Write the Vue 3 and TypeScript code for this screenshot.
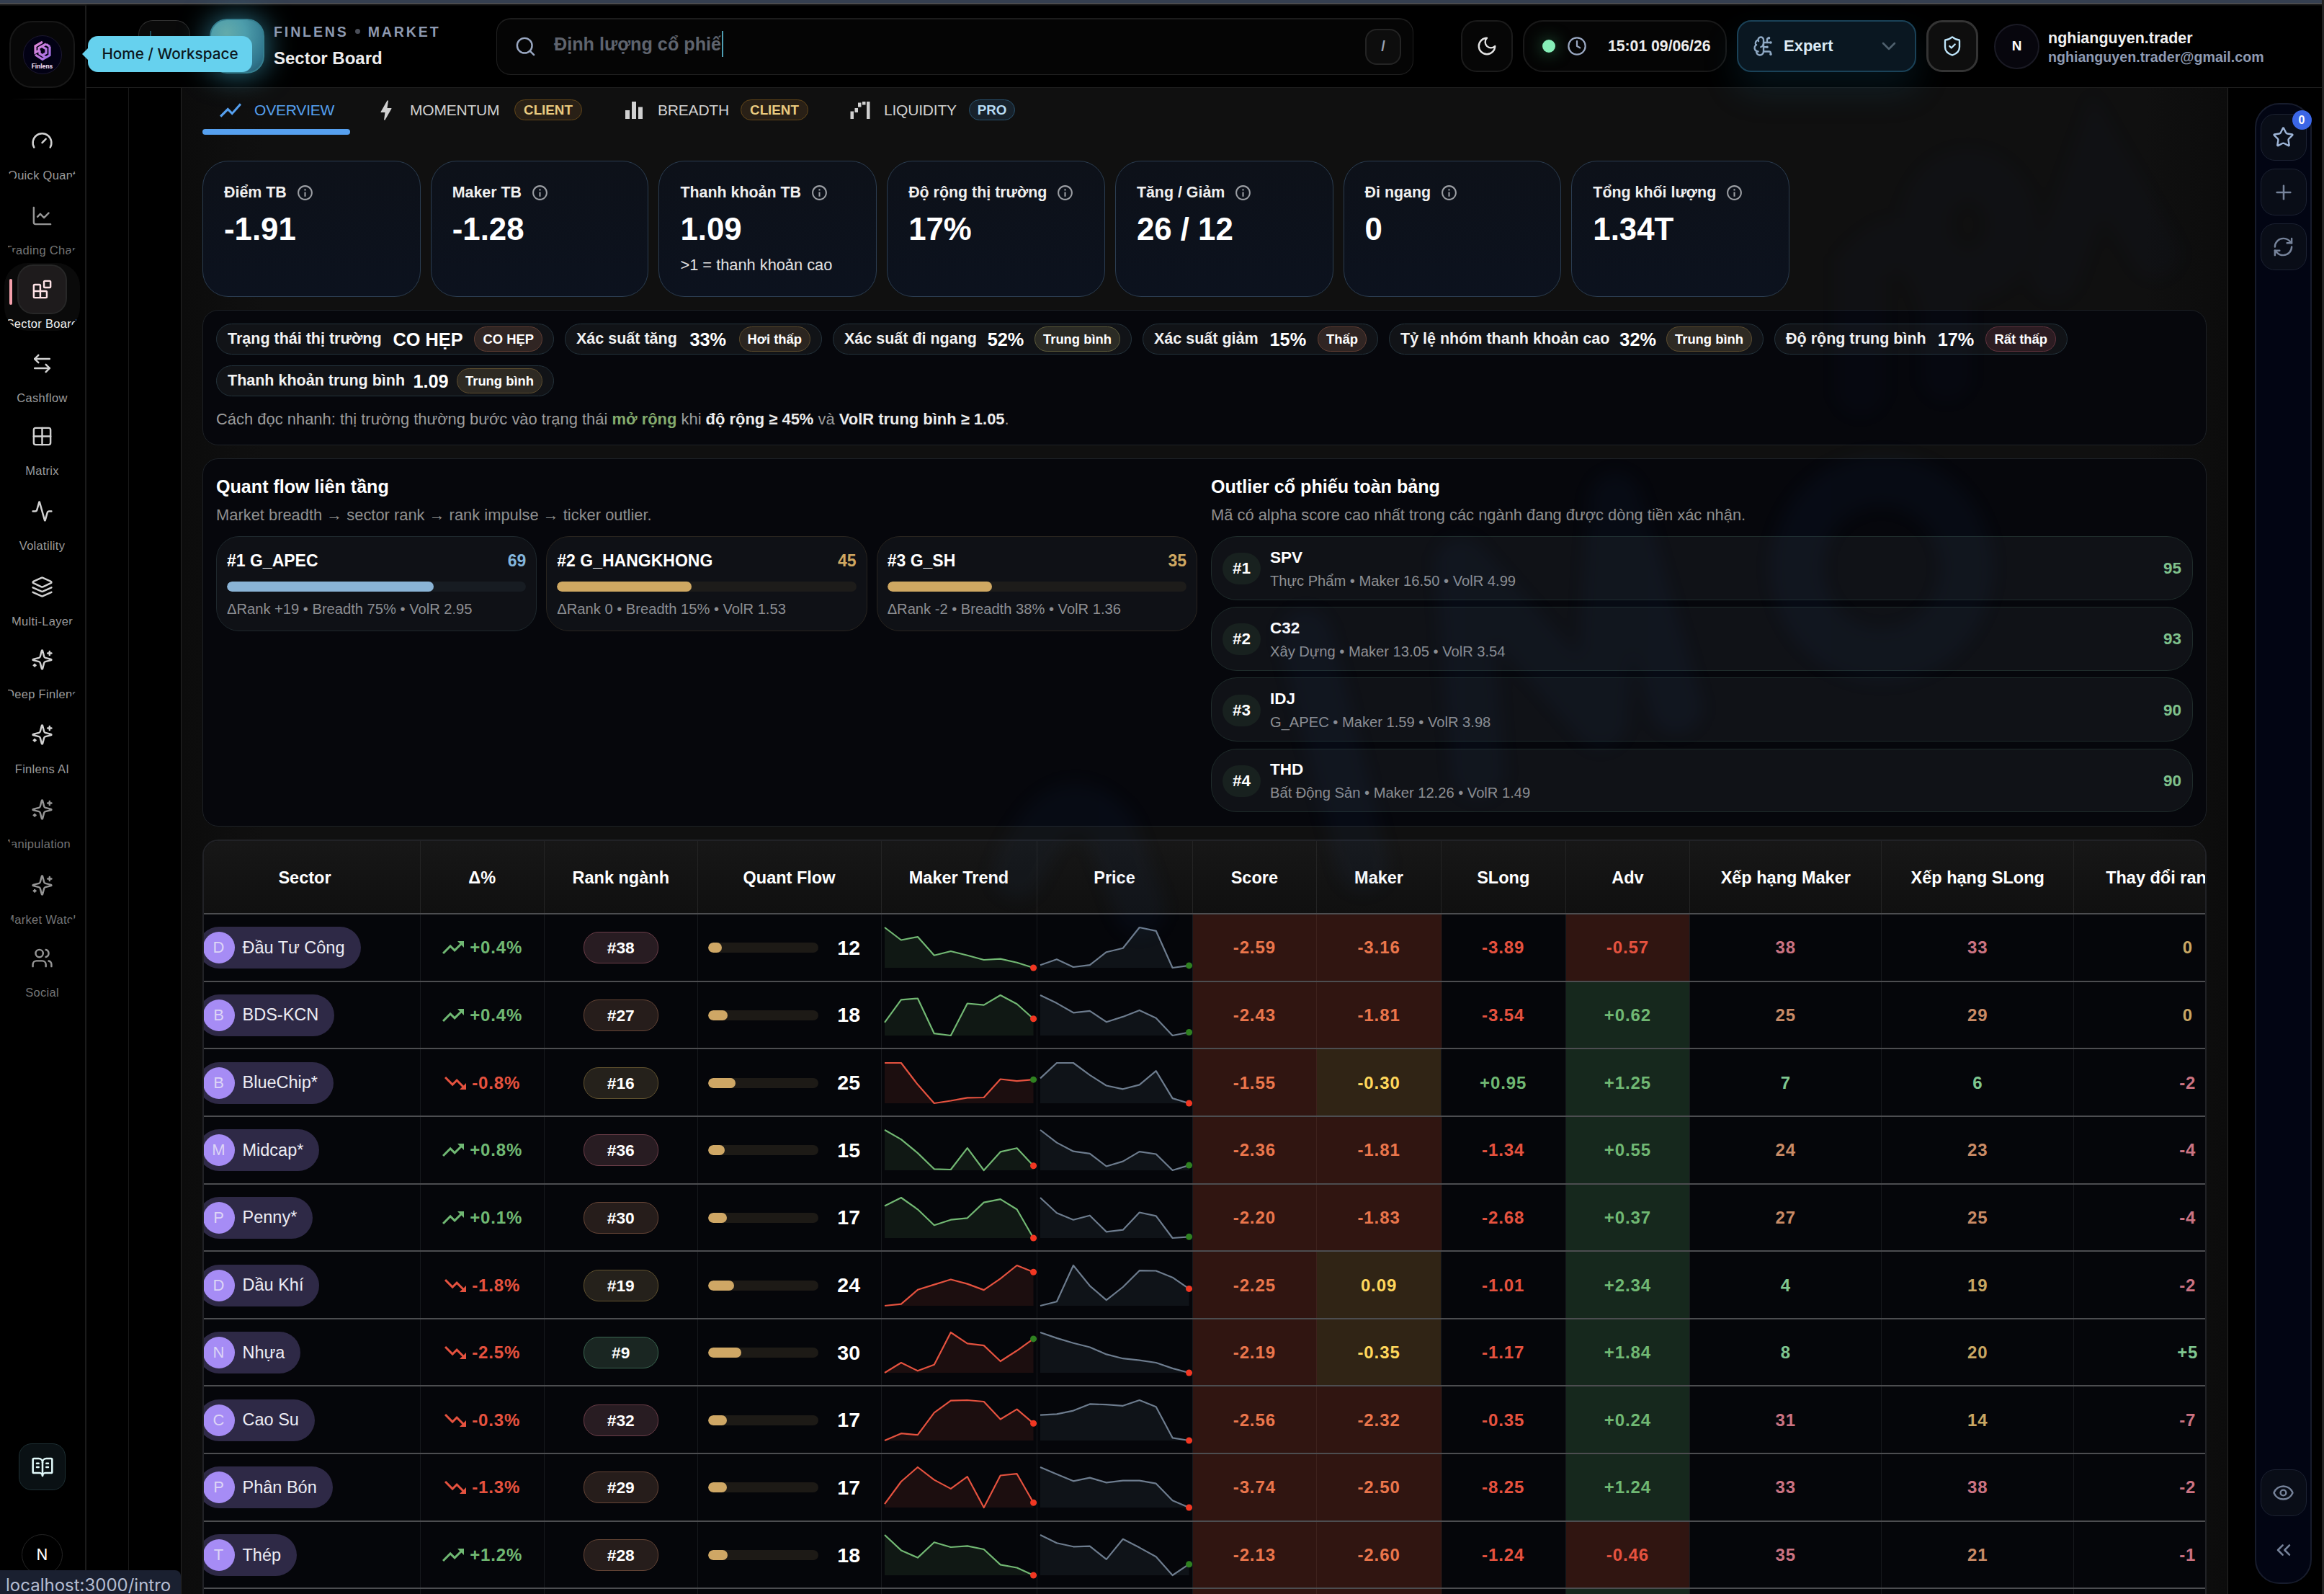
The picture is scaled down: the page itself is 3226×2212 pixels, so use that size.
<script setup lang="ts">
interface NavItem { label: string; icon: string[]; top: number; dim?: boolean; active?: boolean; shift?: number }
interface Row {
  name: string; delta: string; rank: number; flow: number
  maker: number[]; makerUp: boolean; price: number[]; priceUp: boolean
  score: string; mk: string; slong: string; adv: string; rm: number; rs: number; chg: string
}

const ICON: Record<string, string[]> = {
  gauge: ['m12 14 4-4', 'M3.34 19a10 10 0 1 1 17.32 0'],
  chart: ['M3 3v16a2 2 0 0 0 2 2h16', 'm19 9-5 5-4-4-3 3'],
  blocks: ['M15 3h5a1 1 0 0 1 1 1v5a1 1 0 0 1-1 1h-5a1 1 0 0 1-1-1V4a1 1 0 0 1 1-1z', 'M10 21V8a1 1 0 0 0-1-1H4a1 1 0 0 0-1 1v12a1 1 0 0 0 1 1h12a1 1 0 0 0 1-1v-5a1 1 0 0 0-1-1H3'],
  swap: ['M8 3 4 7l4 4', 'M4 7h16', 'm16 21 4-4-4-4', 'M20 17H4'],
  grid: ['M5 3h14a2 2 0 0 1 2 2v14a2 2 0 0 1-2 2H5a2 2 0 0 1-2-2V5a2 2 0 0 1 2-2z', 'M3 12h18', 'M12 3v18'],
  activity: ['M22 12h-2.48a2 2 0 0 0-1.93 1.46l-2.35 8.36a.25.25 0 0 1-.48 0L9.24 2.18a.25.25 0 0 0-.48 0l-2.35 8.36A2 2 0 0 1 4.49 12H2'],
  layers: ['m12.83 2.18a2 2 0 0 0-1.66 0L2.6 6.08a1 1 0 0 0 0 1.83l8.58 3.91a2 2 0 0 0 1.66 0l8.58-3.9a1 1 0 0 0 0-1.83Z', 'm22 17.65-9.17 4.16a2 2 0 0 1-1.66 0L2 17.65', 'm22 12.65-9.17 4.16a2 2 0 0 1-1.66 0L2 12.65'],
  sparkles: ['M9.937 15.5A2 2 0 0 0 8.5 14.063l-6.135-1.582a.5.5 0 0 1 0-.962L8.5 9.936A2 2 0 0 0 9.937 8.5l1.582-6.135a.5.5 0 0 1 .963 0L14.063 8.5A2 2 0 0 0 15.5 9.937l6.135 1.581a.5.5 0 0 1 0 .964L15.5 14.063a2 2 0 0 0-1.437 1.437l-1.582 6.135a.5.5 0 0 1-.963 0z', 'M20 3v4', 'M22 5h-4', 'M4 17v2', 'M5 18H3'],
  users: ['M16 21v-2a4 4 0 0 0-4-4H6a4 4 0 0 0-4 4v2', 'M13 7a4 4 0 1 1-8 0 4 4 0 0 1 8 0z', 'M22 21v-2a4 4 0 0 0-3-3.87', 'M16 3.13a4 4 0 0 1 0 7.75'],
  book: ['M12 7v14', 'M16 12h2', 'M16 8h2', 'M3 18a1 1 0 0 1-1-1V4a1 1 0 0 1 1-1h5a4 4 0 0 1 4 4 4 4 0 0 1 4-4h5a1 1 0 0 1 1 1v13a1 1 0 0 1-1 1h-6a3 3 0 0 0-3 3 3 3 0 0 0-3-3z', 'M6 12h2', 'M6 8h2'],
}

const nav: NavItem[] = [
  { label: 'Quick Quant', icon: ICON.gauge, top: 159 },
  { label: 'Trading Chart', icon: ICON.chart, top: 263, dim: true },
  { label: 'Sector Board', icon: ICON.blocks, top: 365, active: true },
  { label: 'Cashflow', icon: ICON.swap, top: 468 },
  { label: 'Matrix', icon: ICON.grid, top: 569 },
  { label: 'Volatility', icon: ICON.activity, top: 673 },
  { label: 'Multi-Layer', icon: ICON.layers, top: 778 },
  { label: 'Deep Finlens', icon: ICON.sparkles, top: 879 },
  { label: 'Finlens AI', icon: ICON.sparkles, top: 983 },
  { label: 'Manipulation', icon: ICON.sparkles, top: 1087, dim: true, shift: -18 },
  { label: 'Market Watch', icon: ICON.sparkles, top: 1192, dim: true },
  { label: 'Social', icon: ICON.users, top: 1293, dim: true },
]
const navGap = (i: number): number => nav[i].top - (i === 0 ? 138 : nav[i - 1].top + 94)

const kpis = [
  { label: 'Điểm TB', value: '-1.91' },
  { label: 'Maker TB', value: '-1.28' },
  { label: 'Thanh khoản TB', value: '1.09', sub: '>1 = thanh khoản cao' },
  { label: 'Độ rộng thị trường', value: '17%' },
  { label: 'Tăng / Giảm', value: '26 / 12' },
  { label: 'Đi ngang', value: '0' },
  { label: 'Tổng khối lượng', value: '1.34T' },
]

const chips = [
  { label: 'Trạng thái thị trường', value: 'CO HẸP', tag: 'CO HẸP', tone: 'rust' },
  { label: 'Xác suất tăng', value: '33%', tag: 'Hơi thấp', tone: 'amber' },
  { label: 'Xác suất đi ngang', value: '52%', tag: 'Trung bình', tone: 'olive' },
  { label: 'Xác suất giảm', value: '15%', tag: 'Thấp', tone: 'rust' },
  { label: 'Tỷ lệ nhóm thanh khoản cao', value: '32%', tag: 'Trung bình', tone: 'gold' },
  { label: 'Độ rộng trung bình', value: '17%', tag: 'Rất thấp', tone: 'rose' },
  { label: 'Thanh khoản trung bình', value: '1.09', tag: 'Trung bình', tone: 'gold' },
]

const flows = [
  { name: '#1 G_APEC', score: 69, meta: 'ΔRank +19 • Breadth 75% • VolR 2.95', tone: 'blue' },
  { name: '#2 G_HANGKHONG', score: 45, meta: 'ΔRank 0 • Breadth 15% • VolR 1.53', tone: 'sand' },
  { name: '#3 G_SH', score: 35, meta: 'ΔRank -2 • Breadth 38% • VolR 1.36', tone: 'sand' },
]

const outliers = [
  { name: 'SPV', meta: 'Thực Phẩm • Maker 16.50 • VolR 4.99', score: 95 },
  { name: 'C32', meta: 'Xây Dựng • Maker 13.05 • VolR 3.54', score: 93 },
  { name: 'IDJ', meta: 'G_APEC • Maker 1.59 • VolR 3.98', score: 90 },
  { name: 'THD', meta: 'Bất Động Sản • Maker 12.26 • VolR 1.49', score: 90 },
]

const columns = ['Sector', 'Δ%', 'Rank ngành', 'Quant Flow', 'Maker Trend', 'Price', 'Score', 'Maker', 'SLong', 'Adv', 'Xếp hạng Maker', 'Xếp hạng SLong', 'Thay đổi rank Maker']

const rows: Row[] = [
  { name: 'Đầu Tư Công', delta: '+0.4%', rank: 38, flow: 12, maker: [398, 449, 436, 511, 494, 511, 529, 525, 540, 561], makerUp: false, price: [549, 526, 557, 549, 497, 481, 398, 412, 560, 551], priceUp: true, score: '-2.59', mk: '-3.16', slong: '-3.89', adv: '-0.57', rm: 38, rs: 33, chg: '0' },
  { name: 'BDS-KCN', delta: '+0.4%', rank: 27, flow: 18, maker: [778, 687, 682, 822, 830, 702, 708, 669, 704, 763], makerUp: false, price: [669, 701, 739, 732, 776, 755, 729, 760, 830, 817], priceUp: true, score: '-2.43', mk: '-1.81', slong: '-3.54', adv: '+0.62', rm: 25, rs: 29, chg: '0' },
  { name: 'BlueChip*', delta: '-0.8%', rank: 16, flow: 25, maker: [941, 941, 1028, 1103, 1093, 1081, 1080, 1006, 1014, 1008], makerUp: true, price: [1003, 941, 941, 990, 1032, 1046, 1029, 973, 1083, 1103], priceUp: false, score: '-1.55', mk: '-0.30', slong: '+0.95', adv: '+1.25', rm: 7, rs: 6, chg: '-2' },
  { name: 'Midcap*', delta: '+0.8%', rank: 36, flow: 15, maker: [1211, 1249, 1304, 1368, 1370, 1284, 1373, 1299, 1284, 1355], makerUp: false, price: [1211, 1262, 1297, 1306, 1357, 1337, 1298, 1308, 1373, 1353], priceUp: true, score: '-2.36', mk: '-1.81', slong: '-1.34', adv: '+0.55', rm: 24, rs: 23, chg: '-4' },
  { name: 'Penny*', delta: '+0.1%', rank: 30, flow: 17, maker: [1672.8, 1661.4, 1677.6, 1699.3, 1691.9, 1689.5, 1668, 1663.5, 1677.6, 1717], makerUp: false, price: [1661.4, 1682.4, 1691.9, 1685.9, 1708.5, 1705.8, 1681.8, 1686.6, 1717, 1715.3], priceUp: true, score: '-2.20', mk: '-1.83', slong: '-2.68', adv: '+0.37', rm: 27, rs: 25, chg: '-4' },
  { name: 'Dầu Khí', delta: '-1.8%', rank: 19, flow: 24, maker: [386, 379, 321, 300, 279, 297, 322, 276, 222, 249], makerUp: false, price: [386, 369, 222, 305, 363, 310, 243, 244, 271, 317], priceUp: false, score: '-2.25', mk: '0.09', slong: '-1.01', adv: '+2.34', rm: 4, rs: 19, chg: '-2' },
  { name: 'Nhựa', delta: '-2.5%', rank: 9, flow: 30, maker: [660, 619, 652, 627, 496, 541, 549, 613, 570, 522], makerUp: true, price: [496, 519, 539, 556, 585, 602, 609, 619, 642, 660], priceUp: false, score: '-2.19', mk: '-0.35', slong: '-1.17', adv: '+1.84', rm: 8, rs: 20, chg: '+5' },
  { name: 'Cao Su', delta: '-0.3%', rank: 32, flow: 17, maker: [937, 908, 914, 823, 774, 772, 778, 850, 809, 867], makerUp: false, price: [833, 829, 815, 788, 790, 795, 772, 799, 926, 937], priceUp: false, score: '-2.56', mk: '-2.32', slong: '-0.35', adv: '+0.24', rm: 31, rs: 14, chg: '-7' },
  { name: 'Phân Bón', delta: '-1.3%', rank: 29, flow: 17, maker: [1197, 1105, 1046, 1098, 1134, 1085, 1211, 1080, 1073, 1191], makerUp: false, price: [1046, 1075, 1103, 1089, 1109, 1101, 1101, 1113, 1182, 1211], priceUp: false, score: '-3.74', mk: '-2.50', slong: '-8.25', adv: '+1.24', rm: 33, rs: 38, chg: '-2' },
  { name: 'Thép', delta: '+1.2%', rank: 28, flow: 18, maker: [1323, 1386, 1416, 1353, 1373, 1368, 1382, 1445, 1457, 1488], makerUp: false, price: [1323, 1356, 1371, 1369, 1423, 1340, 1375, 1412, 1488, 1443], priceUp: true, score: '-2.13', mk: '-2.60', slong: '-1.24', adv: '-0.46', rm: 35, rs: 21, chg: '-1' },
]

/* Sparkline geometry: ten samples over a 207x56 plot area with a 6px inset */
function pts(v: number[]): [number, number][] {
  const lo = Math.min(...v), hi = Math.max(...v)
  return v.map((y, i) => [5 + i * 22.95, 8 + ((y - lo) / (hi - lo)) * 56])
}
const line = (v: number[]): string => pts(v).map(p => p.map(n => n.toFixed(1)).join(',')).join(' ')
const area = (v: number[]): string => `5,64 ${line(v)} 211.6,64`
const last = (v: number[]): [number, number] => pts(v)[9]
const up = (s: string): boolean => s.startsWith('+')
const tier = (n: number): string => (n <= 10 ? 'green' : n <= 20 ? 'gold' : n <= 30 ? 'orange' : 'pink')
const heat = (s: string): string => (parseFloat(s) > -1 ? 'mid' : 'low')
const chgTone = (s: string): string => (s === '0' ? 'gold' : up(s) ? 'green' : 'pink')
</script>

<template>
  <div class="app">
    <div class="strip"></div>
    <div class="shell">
      <aside class="side">
        <div class="logo">
          <div class="logo-disc">
            <svg width="26" height="29" viewBox="0 0 26 29" fill="none" stroke="url(#lg)" stroke-width="3.2">
              <defs><linearGradient id="lg" x1="0" y1="0" x2="1" y2="1"><stop offset="0" stop-color="#e58ad8" /><stop offset="1" stop-color="#9a6be6" /></linearGradient></defs>
              <path d="M13 2.2 3 8v9l5-3v-3.5L18 5M3 20l10 6.4 4.6-2.6-8.6-5.4V14M23 8.5v12L17.5 24M23 8.5 18 5.4M13 9l5 3v5.500l-5 3" />
            </svg>
            <span>Finlens</span>
          </div>
        </div>
        <div class="side-rule"></div>
        <nav>
          <div v-for="(n, i) in nav" :key="n.label" class="nav-item" :class="{ dim: n.dim, active: n.active }" :style="{ marginTop: navGap(i) + 'px' }">
            <i v-if="n.active" class="mark"></i>
            <div class="nav-icon">
              <svg class="ln" width="31" height="31" viewBox="0 0 24 24"><path v-for="d in n.icon" :key="d" :d="d" /></svg>
            </div>
            <div class="nav-label"><span :style="{ marginLeft: (n.shift ?? 0) + 'px' }">{{ n.label }}</span></div>
          </div>
        </nav>
        <div class="side-foot">
          <div class="book"><svg class="ln" width="32" height="32" viewBox="0 0 24 24"><path v-for="d in ICON.book" :key="d" :d="d" /></svg></div>
          <div class="side-user">N</div>
        </div>
      </aside>

      <div class="right">
        <header class="top">
          <div class="menu-btn"><i></i></div>
          <div class="orb"></div>
          <div class="title">
            <div class="crumb">FINLENS <b></b> MARKET</div>
            <div class="page">Sector Board</div>
          </div>
          <div class="search">
            <svg class="ln" width="31" height="31" viewBox="0 0 24 24"><circle cx="11" cy="11" r="8" /><path d="m21 21-4.300-4.300" /></svg>
            <span class="ph">Định lượng cổ phiế</span><i class="caret"></i>
            <kbd>/</kbd>
          </div>
          <div class="btn moon"><svg class="ln" width="30" height="30" viewBox="0 0 24 24"><path d="M12 3a6 6 0 0 0 9 9 9 9 0 1 1-9-9Z" /></svg></div>
          <div class="time">
            <i class="live"></i>
            <svg class="ln" width="28" height="28" viewBox="0 0 24 24"><circle cx="12" cy="12" r="10" /><path d="M12 6v6l3.500 2" /></svg>
            <span>15:01 09/06/26</span>
          </div>
          <div class="expert">
            <svg class="ln brain" width="30" height="30" viewBox="0 0 24 24">
              <path d="M12 5a3 3 0 1 0-5.997.125 4 4 0 0 0-2.526 5.770 4 4 0 0 0 .556 6.588A4 4 0 1 0 12 18Z" /><path d="M9 13a4.500 4.500 0 0 0 3-4" /><path d="M6.003 5.125A3 3 0 0 0 6.401 6.500" /><path d="M3.477 10.896a4 4 0 0 1 .585-.396" /><path d="M6 18a4 4 0 0 1-1.967-.516" /><path d="M12 13h4" /><path d="M12 18h6a2 2 0 0 1 2 2v1" /><path d="M12 8h8" /><path d="M16 8V5a2 2 0 0 1 2-2" /><circle cx="16" cy="13" r=".5" /><circle cx="18" cy="3" r=".5" /><circle cx="20" cy="21" r=".5" /><circle cx="20" cy="8" r=".5" />
            </svg>
            <span>Expert</span>
            <svg class="ln chev" width="32" height="32" viewBox="0 0 24 24"><path d="m6 9 6 6 6-6" /></svg>
          </div>
          <div class="btn shield"><svg class="ln" width="30" height="30" viewBox="0 0 24 24"><path d="M20 13c0 5-3.500 7.500-7.660 8.950a1 1 0 0 1-.670-.010C7.500 20.500 4 18 4 13V6a1 1 0 0 1 1-1c2 0 4.500-1.200 6.240-2.720a1.170 1.170 0 0 1 1.520 0C14.510 3.810 17 5 19 5a1 1 0 0 1 1 1z" /><path d="m9 12 2 2 4-4" /></svg></div>
          <div class="avatar">N</div>
          <div class="who">
            <div class="nm">nghianguyen.trader</div>
            <div class="em">nghianguyen.trader@gmail.com</div>
          </div>
        </header>

        <div class="stage">
          <div class="gutter"></div>
          <main class="board">
            <svg class="haze" width="2842" height="2090" viewBox="0 0 2842 2090" fill="none" stroke="#2a62b8" stroke-width="72" stroke-linecap="round">
              <g opacity=".05">
                <ellipse cx="2360" cy="666" rx="118" ry="122" />
                <path d="M1800 950 1776 660 1970 880 1990 570 2075 860" stroke-linejoin="round" />
                <path d="M1560 760 1640 1080" />
                <path d="M1160 1090q60-140 130-60l40 110" />
              </g>
              <g opacity=".025">
                <path d="M2330 420V250q80-90 120 60v90" />
                <ellipse cx="2480" cy="190" rx="60" ry="70" />
                <path d="M2600 260 2660 90 2740 230" />
              </g>
            </svg>
            <div class="tabs">
              <div class="tab on"><svg width="36" height="36" viewBox="0 0 24 24"><path d="m3.500 18.490 6-6.010 4 4L22 6.920l-1.410-1.410-7.090 7.970-4-4L2 16.990z" /></svg><span class="t1">OVERVIEW</span></div>
              <div class="tab"><svg width="36" height="36" viewBox="0 0 24 24"><path d="M11 21h-1l1-7H7.500c-.580 0-.570-.320-.380-.660s.050-.080.070-.120C8.480 10.940 10.420 7.540 13 3h1l-1 7h3.500c.490 0 .560.330.470.510l-.070.150C12.960 17.550 11 21 11 21" /></svg><span class="t2">MOMENTUM</span><em class="client">CLIENT</em></div>
              <div class="tab"><svg width="36" height="36" viewBox="0 0 24 24"><path d="M10 20h4V4h-4zm-6 0h4v-8H4zM16 9v11h4V9z" /></svg><span class="t3">BREADTH</span><em class="client">CLIENT</em></div>
              <div class="tab"><svg width="36" height="36" viewBox="0 0 24 24"><path d="M18 4h3v16h-3zM3 13h3v7H3zm11-9h3v3h-3zm-4 1h3v4h-3zm-3 5h3v4H7z" /></svg><span class="t4">LIQUIDITY</span><em class="pro">PRO</em></div>
            </div>

            <section class="kpis">
              <div v-for="k in kpis" :key="k.label" class="kpi">
                <div class="kl">{{ k.label }}<svg width="25" height="25" viewBox="0 0 24 24"><path d="M11 7h2v2h-2zm0 4h2v6h-2zm1-9C6.480 2 2 6.480 2 12s4.480 10 10 10 10-4.480 10-10S17.520 2 12 2m0 18c-4.410 0-8-3.590-8-8s3.590-8 8-8 8 3.590 8 8-3.590 8-8 8" /></svg></div>
                <div class="kv">{{ k.value }}</div>
                <div v-if="k.sub" class="ks">{{ k.sub }}</div>
              </div>
            </section>

            <section class="panel regime">
              <div class="chips">
                <div v-for="c in chips" :key="c.label" class="chip"><span class="cl">{{ c.label }}</span><span class="cv">{{ c.value }}</span><span class="tag" :class="c.tone">{{ c.tag }}</span></div>
              </div>
              <p>Cách đọc nhanh: thị trường thường bước vào trạng thái <b class="grn">mở rộng</b> khi <b>độ rộng ≥ 45%</b> và <b>VolR trung bình ≥ 1.05</b>.</p>
            </section>

            <section class="panel duo">
              <div class="left">
                <h3>Quant flow liên tầng</h3>
                <p>Market breadth → sector rank → rank impulse → ticker outlier.</p>
                <div class="flows">
                  <div v-for="f in flows" :key="f.name" class="flow" :class="f.tone">
                    <div class="fh"><span>{{ f.name }}</span><b>{{ f.score }}</b></div>
                    <div class="bar"><i :style="{ width: f.score + '%' }"></i></div>
                    <div class="fm">{{ f.meta }}</div>
                  </div>
                </div>
              </div>
              <div class="rightcol">
                <h3>Outlier cổ phiếu toàn bảng</h3>
                <p>Mã có alpha score cao nhất trong các ngành đang được dòng tiền xác nhận.</p>
                <div class="outs">
                  <div v-for="(o, i) in outliers" :key="o.name" class="out">
                    <span class="no">#{{ i + 1 }}</span>
                    <div class="ob"><div class="oname">{{ o.name }}</div><div class="om">{{ o.meta }}</div></div>
                    <b>{{ o.score }}</b>
                  </div>
                </div>
              </div>
            </section>

            <section class="table">
              <div class="tr th"><div v-for="c in columns" :key="c" class="td">{{ c }}</div></div>
              <div v-for="r in rows" :key="r.name" class="tr">
                <div class="td sector"><span class="pill"><i>{{ r.name[0].replace('Đ', 'D') }}</i>{{ r.name }}</span></div>
                <div class="td delta" :class="up(r.delta) ? 'pos' : 'neg'">
                  <svg width="36" height="36" viewBox="0 0 24 24"><path v-if="up(r.delta)" d="m16 6 2.290 2.290-4.880 4.880-4-4L2 16.590 3.410 18l6-6 4 4 6.300-6.290L22 12V6z" /><path v-else d="m16 18 2.290-2.290-4.880-4.880-4 4L2 7.410 3.410 6l6 6 4-4 6.300 6.290L22 12v6z" /></svg>{{ r.delta }}
                </div>
                <div class="td"><span class="rank" :class="tier(r.rank)">#{{ r.rank }}</span></div>
                <div class="td qf"><div class="qbar"><i :style="{ width: r.flow + '%' }"></i></div><b>{{ r.flow }}</b></div>
                <div class="td spark" :class="up(r.delta) ? 'sg' : 'sr'">
                  <svg width="216" height="72" viewBox="0 0 216 72"><polygon :points="area(r.maker)" /><polyline :points="line(r.maker)" /><circle :cx="last(r.maker)[0]" :cy="last(r.maker)[1]" r="4.500" :class="r.makerUp ? 'dg' : 'dr'" /></svg>
                </div>
                <div class="td spark ss">
                  <svg width="216" height="72" viewBox="0 0 216 72"><polygon :points="area(r.price)" /><polyline :points="line(r.price)" /><circle :cx="last(r.price)[0]" :cy="last(r.price)[1]" r="4.500" :class="r.priceUp ? 'dg' : 'dr'" /></svg>
                </div>
                <div class="td num low">{{ r.score }}</div>
                <div class="td num" :class="heat(r.mk)">{{ r.mk }}</div>
                <div class="td num" :class="up(r.slong) ? 'pos' : 'neg'">{{ r.slong }}</div>
                <div class="td num" :class="up(r.adv) ? 'pos gbg' : 'neg rbg'">{{ r.adv }}</div>
                <div class="td num" :class="'c-' + tier(r.rm)">{{ r.rm }}</div>
                <div class="td num" :class="'c-' + tier(r.rs)">{{ r.rs }}</div>
                <div class="td num" :class="'c-' + chgTone(r.chg)">{{ r.chg }}</div>
              </div>
              <div class="tr"><div v-for="n in 13" :key="n" class="td" :class="{ low: n === 7 || n === 8, gbg: n === 10 }"></div></div>
            </section>
          </main>

          <div class="railwrap">
            <div class="rail">
              <div class="rb star"><svg class="ln" width="31" height="31" viewBox="0 0 24 24"><path d="M11.525 2.295a.530.530 0 0 1 .950 0l2.310 4.679a2.123 2.123 0 0 0 1.595 1.160l5.166.756a.530.530 0 0 1 .294.904l-3.736 3.638a2.123 2.123 0 0 0-.611 1.878l.882 5.140a.530.530 0 0 1-.771.560l-4.618-2.428a2.122 2.122 0 0 0-1.973 0L6.396 21.010a.530.530 0 0 1-.770-.560l.881-5.139a2.122 2.122 0 0 0-.611-1.879L2.160 9.795a.530.530 0 0 1 .294-.906l5.165-.755a2.122 2.122 0 0 0 1.597-1.160z" /></svg><span class="badge">0</span></div>
              <div class="rb"><svg class="ln" width="32" height="32" viewBox="0 0 24 24"><path d="M5 12h14" /><path d="M12 5v14" /></svg></div>
              <div class="rb"><svg class="ln" width="31" height="31" viewBox="0 0 24 24"><path d="M3 12a9 9 0 0 1 9-9 9.750 9.750 0 0 1 6.740 2.740L21 8" /><path d="M21 3v5h-5" /><path d="M21 12a9 9 0 0 1-9 9 9.750 9.750 0 0 1-6.740-2.740L3 16" /><path d="M8 16H3v5" /></svg></div>
              <div class="rb eye"><svg class="ln" width="31" height="31" viewBox="0 0 24 24"><path d="M2.062 12.348a1 1 0 0 1 0-.696 10.750 10.750 0 0 1 19.876 0 1 1 0 0 1 0 .696 10.750 10.750 0 0 1-19.876 0" /><circle cx="12" cy="12" r="3" /></svg></div>
              <div class="collapse"><svg class="ln" width="32" height="32" viewBox="0 0 24 24"><path d="m11 17-5-5 5-5" /><path d="m18 17-5-5 5-5" /></svg></div>
            </div>
          </div>
        </div>
      </div>
    </div>
    <div class="tip">Home / Workspace</div>
    <div class="status">localhost:3000/intro</div>
  </div>
</template>

<style>
html, body { background: #000; overflow: hidden; }
</style>

<style scoped>
* { box-sizing: border-box; }
.app { position: relative; width: 3226px; height: 2212px; overflow: hidden; background: #000; color: #fff; font-family: "Liberation Sans", Arial, sans-serif; display: flex; flex-direction: column; border-right: 3px solid #222; font-size: 22px; }
.strip { flex: none; height: 6px; background: #353f50; border-bottom: 2px solid #4a4b4e; margin-right: -3px; }
.shell { flex: 1; display: flex; min-height: 0; }
.ln { fill: none; stroke: currentColor; stroke-width: 1.9; stroke-linecap: round; stroke-linejoin: round; flex: none; display: block; }

.side { width: 120px; flex: none; border-right: 2px solid #1b1b1b; border-top: 2px solid #131313; display: flex; flex-direction: column; height: 2206px; }
.logo { width: 91px; height: 93px; margin: 21px 0 0 13px; border: 2px solid #181818; border-radius: 32px; background: #070707; display: flex; align-items: center; justify-content: center; }
.logo-disc { width: 54px; height: 54px; border-radius: 50%; background: #020114; border: 1px solid #1c1830; display: flex; flex-direction: column; align-items: center; padding-top: 6px; gap: 2px; }
.logo-disc span { font: 700 9px/11px Roboto, sans-serif; color: #f0dcf0; }
.side-rule { height: 1px; margin: 15px 0 0 14px; background: linear-gradient(90deg, #000, #242424 50%, #1a1a1a); }
.nav-item { position: relative; width: 105px; height: 94px; margin-left: 6px; border-radius: 32px; overflow: hidden; color: #d2d2d2; display: flex; flex-direction: column; align-items: center; }
.nav-icon { width: 69px; height: 69px; margin-top: 2px; border-radius: 22px; display: flex; align-items: center; justify-content: center; flex: none; border: 2px solid transparent; }
.nav-label { width: 95px; height: 24px; display: flex; justify-content: center; overflow: hidden; white-space: nowrap; font-size: 16.500px; line-height: 24px; color: #9b9b9b; margin-top: 1px; letter-spacing: .3px; }
.nav-item.dim { color: #959595; }
.nav-item.dim .nav-label { color: #747474; }
.nav-item.active { background: #0a0a0a; color: #ffe3e6; }
.nav-item.active .nav-label { color: #f0f0f0; }
.nav-item.active .nav-icon { background: #1e1b1c; border-color: #272727; }
.mark { position: absolute; left: 7px; top: 22px; width: 4px; height: 36px; border-radius: 2px; background: #f4a0ab; }
.side-foot { margin-top: auto; height: 203px; padding-left: 26px; flex: none; }
.book { width: 65px; height: 65px; margin-top: -6px; border-radius: 18px; border: 1px solid #1e3034; background: #0a1114; color: #e2fbfb; display: flex; align-items: center; justify-content: center; }
.side-user { width: 57px; height: 57px; margin: 61px 0 0 4px; border: 1px solid #242424; border-radius: 50%; display: flex; align-items: center; justify-content: center; font: 400 21px "Inter", sans-serif; }

.right { flex: 1; display: flex; flex-direction: column; min-width: 0; }
.top { height: 116px; flex: none; border-bottom: 1px solid #1e1e1e; border-top: 2px solid #0b0b0b; display: flex; align-items: center; padding: 0 0 1px 72px; position: relative; z-index: 2; }
.menu-btn { width: 72px; height: 72px; border-radius: 20px; border: 1px solid #262626; border-top-color: #333; background: #0a0a0a; padding: 14px 0 0 15px; }
.menu-btn i { display: block; width: 2px; height: 30px; background: #1f4b58; }
.orb { width: 76px; height: 76px; margin-left: 27px; border-radius: 24px; background: radial-gradient(circle at 30% 25%, #63aaaa 0, #4d9dab 35%, #31788f 75%, #23566b 100%); border: 2px solid #357f90; box-shadow: 0 0 42px rgba(60, 160, 190, .75); }
.title { width: 309px; margin-left: 13px; }
.crumb { font-weight: 700; font-size: 19.500px; line-height: 22px; letter-spacing: 2.900px; color: #8e9ab2; display: flex; align-items: center; margin-top: -1px; }
.crumb b { width: 7px; height: 7px; border-radius: 50%; background: #4a4e58; margin: 0 11px 0 9px; }
.page { font-weight: 700; font-size: 24px; line-height: 28px; margin-top: 12px; color: #ededed; }
.search { width: 1273px; height: 79px; border-radius: 20px; border: 1px solid #202020; border-top: 2px solid #1c1c1c; background: #050505; display: flex; align-items: center; padding: 0 16px 0 24px; color: #9aa8c2; }
.ph { font-weight: 700; font-size: 25.200px; color: #5f646e; margin-left: 24px; position: relative; top: -3px; }
.caret { width: 2px; height: 36px; background: #4f9fb4; margin-left: 1px; margin-top: -7px; }
.search kbd { margin-left: auto; width: 50px; height: 50px; border-radius: 16px; border: 2px solid #242424; background: #0d0d0d; display: flex; align-items: center; justify-content: center; font: 700 20px "Liberation Sans", sans-serif; color: #97a1b4; }
.btn { width: 72px; height: 72px; border-radius: 22px; border: 2px solid #1b1b1b; background: #060606; display: flex; align-items: center; justify-content: center; }
.moon { margin-left: 66px; color: #e4e4e4; }
.time { width: 283px; height: 72px; margin-left: 14px; border-radius: 28px; border: 2px solid #191919; background: #050505; display: flex; align-items: center; padding-left: 25px; color: #9aa8c2; }
.live { width: 18px; height: 18px; border-radius: 50%; background: #86efb8; box-shadow: 0 0 22px rgba(80, 220, 140, .5); margin-right: 16px; }
.time span { font-weight: 700; font-size: 21.200px; color: #ededed; margin-left: 29px; }
.expert { width: 249px; height: 72px; margin-left: 14px; border-radius: 20px; border: 2px solid #1a4258; background: #0a1721; box-shadow: 0 24px 50px rgba(30, 110, 150, .18); display: flex; align-items: center; padding: 0 20px 0 20px; color: #8fa9c4; }
.expert span { font-weight: 700; font-size: 22px; color: #dcebf5; margin-left: 13px; }
.chev { margin-left: auto; color: #50616e; }
.shield { margin-left: 14px; border: 3px solid #343434; background: #0e0e0e; color: #bfe6fb; }
.avatar { width: 63px; height: 63px; margin-left: 22px; border-radius: 50%; border: 2px solid #1a1a24; background: #07060d; display: flex; align-items: center; justify-content: center; font-weight: 700; font-size: 19px; }
.who { margin-left: 12px; font-weight: 700; line-height: 26px; padding-top: 3px; }
.nm { font-size: 21.500px; color: #f1f1f1; }
.em { font-size: 19.650px; color: #8e9ab2; }

.stage { flex: 1; display: flex; min-height: 0; }
.gutter { width: 59px; flex: none; border-right: 1px solid #191919; margin-right: 72px; }
.board { position: relative; width: 2842px; flex: none; border-left: 1px solid #262626; border-right: 1px solid #262626; background: linear-gradient(90deg, #0c0c0c, #101010 4%, #101010 96%, #0c0c0c); padding: 0 29px; overflow: hidden; height: 2090px; }
.haze { position: absolute; left: 0; top: 0; filter: blur(12px); pointer-events: none; z-index: 1; }

.tabs { height: 65px; display: flex; }
.tab { display: flex; align-items: center; height: 61px; color: #d0d0d0; font-size: 21px; letter-spacing: -.2px; margin-left: 32px; }
.tab svg { fill: currentColor; flex: none; margin-right: 15px; }
.tab.on { color: #56a0ef; position: relative; margin-left: 0; width: 205px; padding-left: 21px; }
.tab.on::after { content: ""; position: absolute; left: 0; right: 0; bottom: -4px; height: 8px; border-radius: 4px; background: #56a0ef; }
.tab:nth-child(3), .tab:nth-child(4) { margin-left: 54px; }
.t2 { width: 131px; } .t3 { width: 101px; } .t4 { width: 104px; }
.tab em { font: 700 18.800px/27px "Liberation Sans", sans-serif; letter-spacing: 0; height: 29px; border-radius: 15px; text-align: center; margin-left: 14px; border: 1px solid; }
.client { width: 94px; color: #eacb80; background: #292016; border-color: #624619 !important; }
.pro { width: 64px; color: #b8dcf4; background: #17222c; border-color: #28516d !important; }

.kpis { display: flex; gap: 14px; margin-top: 36px; width: 2203px; }
.kpi { flex: 1; height: 189px; border-radius: 36px; border: 1px solid #2b3d51; background: linear-gradient(180deg, #0d1119, #0c121e); padding: 30px 0 0 29px; }
.kl { display: flex; align-items: center; font-weight: 700; font-size: 21.400px; line-height: 26px; color: #f0f0f0; white-space: nowrap; }
.kl svg { fill: #9b9ea3; margin-left: 13px; }
.kv { font-weight: 700; font-size: 43.800px; line-height: 50px; margin-top: 13px; }
.ks { font-size: 21.800px; line-height: 26px; margin-top: 12px; color: #e2e2e2; }

.panel { border: 1px solid #1d2126; background: #06070c; border-radius: 22px; }
.regime { height: 188px; margin-top: 18px; padding: 18px 18px 0; }
.chips { display: flex; flex-wrap: wrap; gap: 15px; width: 2700px; }
.chip { height: 43px; border-radius: 22px; border: 1px solid #24333c; background: #111317; display: flex; align-items: center; justify-content: space-between; padding: 0 15px; white-space: nowrap; font-weight: 700; }
.chip:nth-child(1), .chip:nth-child(7) { width: 469px; }
.chip:nth-child(2) { width: 357px; }
.chip:nth-child(3) { width: 415px; }
.chip:nth-child(4) { width: 327px; }
.chip:nth-child(5) { width: 520px; }
.chip:nth-child(6) { width: 407px; }
.cl { font-size: 21.500px; color: #f2f2f2; }
.cv { font-size: 25.300px; position: relative; top: 1px; }
.tag { height: 35px; line-height: 33px; border-radius: 18px; border: 1px solid; padding: 0 11px; font-size: 18.400px; }
.rust { background: #302523; border-color: #613e33; }
.amber { background: #2b2520; border-color: #5b4a2c; }
.olive { background: #2b2b25; border-color: #5c5a3a; }
.gold.tag { background: #2e2a23; border-color: #5c4c2e; }
.rose { background: #2c1c22; border-color: #61333e; }
.regime p { margin: 18px 0 0; font-size: 21.950px; line-height: 28px; color: #9c9c9c; }
.regime p b { color: #ececec; } .regime p b.grn { color: #84ab6e; }

.duo { height: 511px; margin-top: 18px; padding: 22px 18px 0; display: flex; }
.left { width: 1362px; margin-right: 19px; }
.rightcol { flex: 1; }
h3 { font-size: 25.100px; line-height: 32px; margin: 0; }
.duo p { margin: 11px 0 0; font-size: 21.900px; line-height: 26px; color: #8f8f8f; }
.flows { display: flex; gap: 13px; margin-top: 16px; }
.flow { flex: 1; height: 132px; border-radius: 32px; border: 1px solid #1e282d; background: #0f1116; padding: 19px 14px 0 14px; }
.flow.sand { border-color: #28241f; }
.fh { display: flex; justify-content: space-between; font-weight: 700; font-size: 23px; line-height: 28px; }
.blue b { color: #83b6dc; } .sand b { color: #cfa862; }
.bar { height: 14px; margin-top: 15px; border-radius: 7px; background: #1d1c1a; overflow: hidden; }
.bar i { display: block; height: 100%; border-radius: 7px; background: #cfa862; }
.blue .bar { background: #171c22; } .blue .bar i { background: #8ab4d6; }
.fm { font-size: 20.150px; line-height: 24px; margin-top: 12px; color: #8d8f93; }
.outs { display: flex; flex-direction: column; gap: 9.700px; margin-top: 16px; }
.out { height: 88.500px; border-radius: 36px; border: 1px solid #1f2c2b; background: #101217; display: flex; align-items: center; padding: 2px 15px 0; }
.no { width: 53px; height: 44px; border-radius: 22px; background: #18211f; display: flex; align-items: center; justify-content: center; font-weight: 700; font-size: 22.500px; margin-right: 13px; }
.oname { font-weight: 700; font-size: 22.500px; line-height: 28px; }
.om { font-size: 20.150px; line-height: 26px; margin-top: 5px; color: #8d8f93; }
.out > b { margin-left: auto; color: #7fc18c; font-size: 22.500px; }

.table { margin-top: 18px; height: 1100px; border: 2px solid #212226; border-radius: 22px 22px 0 0; overflow: hidden; background: #05060a; }
.tr { display: grid; grid-template-columns: 320px 172.500px 212.500px 255px 216px 216px 172.700px 172.700px 172.700px 172.700px 266px 267px 316px; margin-left: -19.500px; width: 2932px; height: 93.650px; border-bottom: 2px solid #4c4d50; padding-top: 0; }
.th { height: 102px; background: linear-gradient(180deg, #171717, #101010); font-weight: 700; font-size: 23.500px; }
.td { display: flex; align-items: center; justify-content: center; border-right: 1px solid #17191d; min-width: 0; padding-top: 1px; white-space: nowrap; }
.th .td { border-right-color: #242424; padding-top: 3px; }
.sector { justify-content: flex-start; padding-left: 11px; }
.pill { display: flex; align-items: center; height: 58px; border-radius: 29px; background: #2e2946; padding: 0 22px 0 7px; font-size: 23.500px; color: #ececf4; white-space: nowrap; }
.pill i { width: 44px; height: 44px; border-radius: 50%; background: #a68cf5; display: flex; align-items: center; justify-content: center; font-style: normal; font-size: 22px; color: #ddd5f6; margin-right: 11px; }
.delta { font-weight: 700; font-size: 24px; padding-right: 2px; letter-spacing: .9px; }
.delta svg { fill: currentColor; margin-right: 5px; }
.pos { color: #70b873; } .neg { color: #e5523f; }
.rank { width: 104px; height: 44px; line-height: 42px; border-radius: 21px; border: 1px solid; text-align: center; font-weight: 700; font-size: 22.800px; }
.rank.pink { background: #281c22; border-color: #6b3d48; }
.rank.orange { background: #261d1b; border-color: #664536; }
.rank.gold { background: #25211b; border-color: #62532f; }
.rank.green { background: #1a2622; border-color: #3a6650; }
.qf { justify-content: flex-start; padding-left: 14px; }
.qbar { width: 153.500px; height: 14px; border-radius: 7px; background: #1d1a16; overflow: hidden; }
.qbar i { display: block; height: 100%; border-radius: 7px; background: #cfa765; min-width: 19px; }
.qf b { width: 58px; text-align: right; font-size: 28.500px; }
.spark svg { display: block; flex: none; }
polyline { fill: none; stroke-width: 2.200; stroke-linejoin: round; }
.sg polyline { stroke: #72b873; } .sg polygon { fill: #101814; }
.sr polyline { stroke: #e5523f; } .sr polygon { fill: #1c0e0f; }
.ss polyline { stroke: #6d7c8e; } .ss polygon { fill: #0f1318; }
.dg { fill: #2f8120; } .dr { fill: #f23722; }
.num { font-weight: 700; font-size: 24px; letter-spacing: .9px; }
.low { background: #301511; color: #ea764c; border-right-color: #3d211c; }
.mid { background: #302415; color: #ffd75c; }
.gbg { background: #16281d; } .rbg { background: #301511; }
.c-green { color: #7fc790; } .c-gold { color: #c9a763; } .c-orange { color: #c98b66; } .c-pink { color: #cb7382; }

.railwrap { flex: 1; display: flex; padding: 21px 0 0 37px; }
.rail { width: 79px; height: 2055px; border-radius: 34px; border: 2px solid #171c2c; background: #020513; display: flex; flex-direction: column; align-items: center; gap: 11px; padding: 13px 0 0; }
.rb { position: relative; width: 64px; height: 65px; border-radius: 20px; border: 1px solid #1c2232; background: #090d17; display: flex; align-items: center; justify-content: center; color: #76839a; flex: none; }
.star { color: #9db4d6; }
.badge { position: absolute; right: -8px; top: -6px; width: 27px; height: 27px; border-radius: 50%; background: #3b66e6; color: #fff; font-weight: 700; font-size: 16px; line-height: 27px; text-align: center; }
.eye { margin-top: auto; }
.collapse { height: 90px; margin-top: -9px; display: flex; align-items: center; color: #76839a; flex: none; }

.tip { position: absolute; left: 122px; top: 50px; width: 228px; height: 50px; border-radius: 14px; background: #66d1ee; color: #0c1720; font: 500 20.700px/50px Inter, sans-serif; text-align: center; white-space: nowrap; z-index: 5; }
.tip::before { content: ""; position: absolute; left: -8px; top: 15px; border: 10px solid transparent; border-left: 0; border-right-color: #66d1ee; }
.status { position: absolute; left: 0; bottom: 0; width: 251px; height: 33px; background: #1a2030; border-radius: 0 8px 0 0; color: #b4bdd2; font: 400 24px/41px Inter, sans-serif; padding-left: 8px; overflow: hidden; white-space: nowrap; z-index: 5; }
</style>
